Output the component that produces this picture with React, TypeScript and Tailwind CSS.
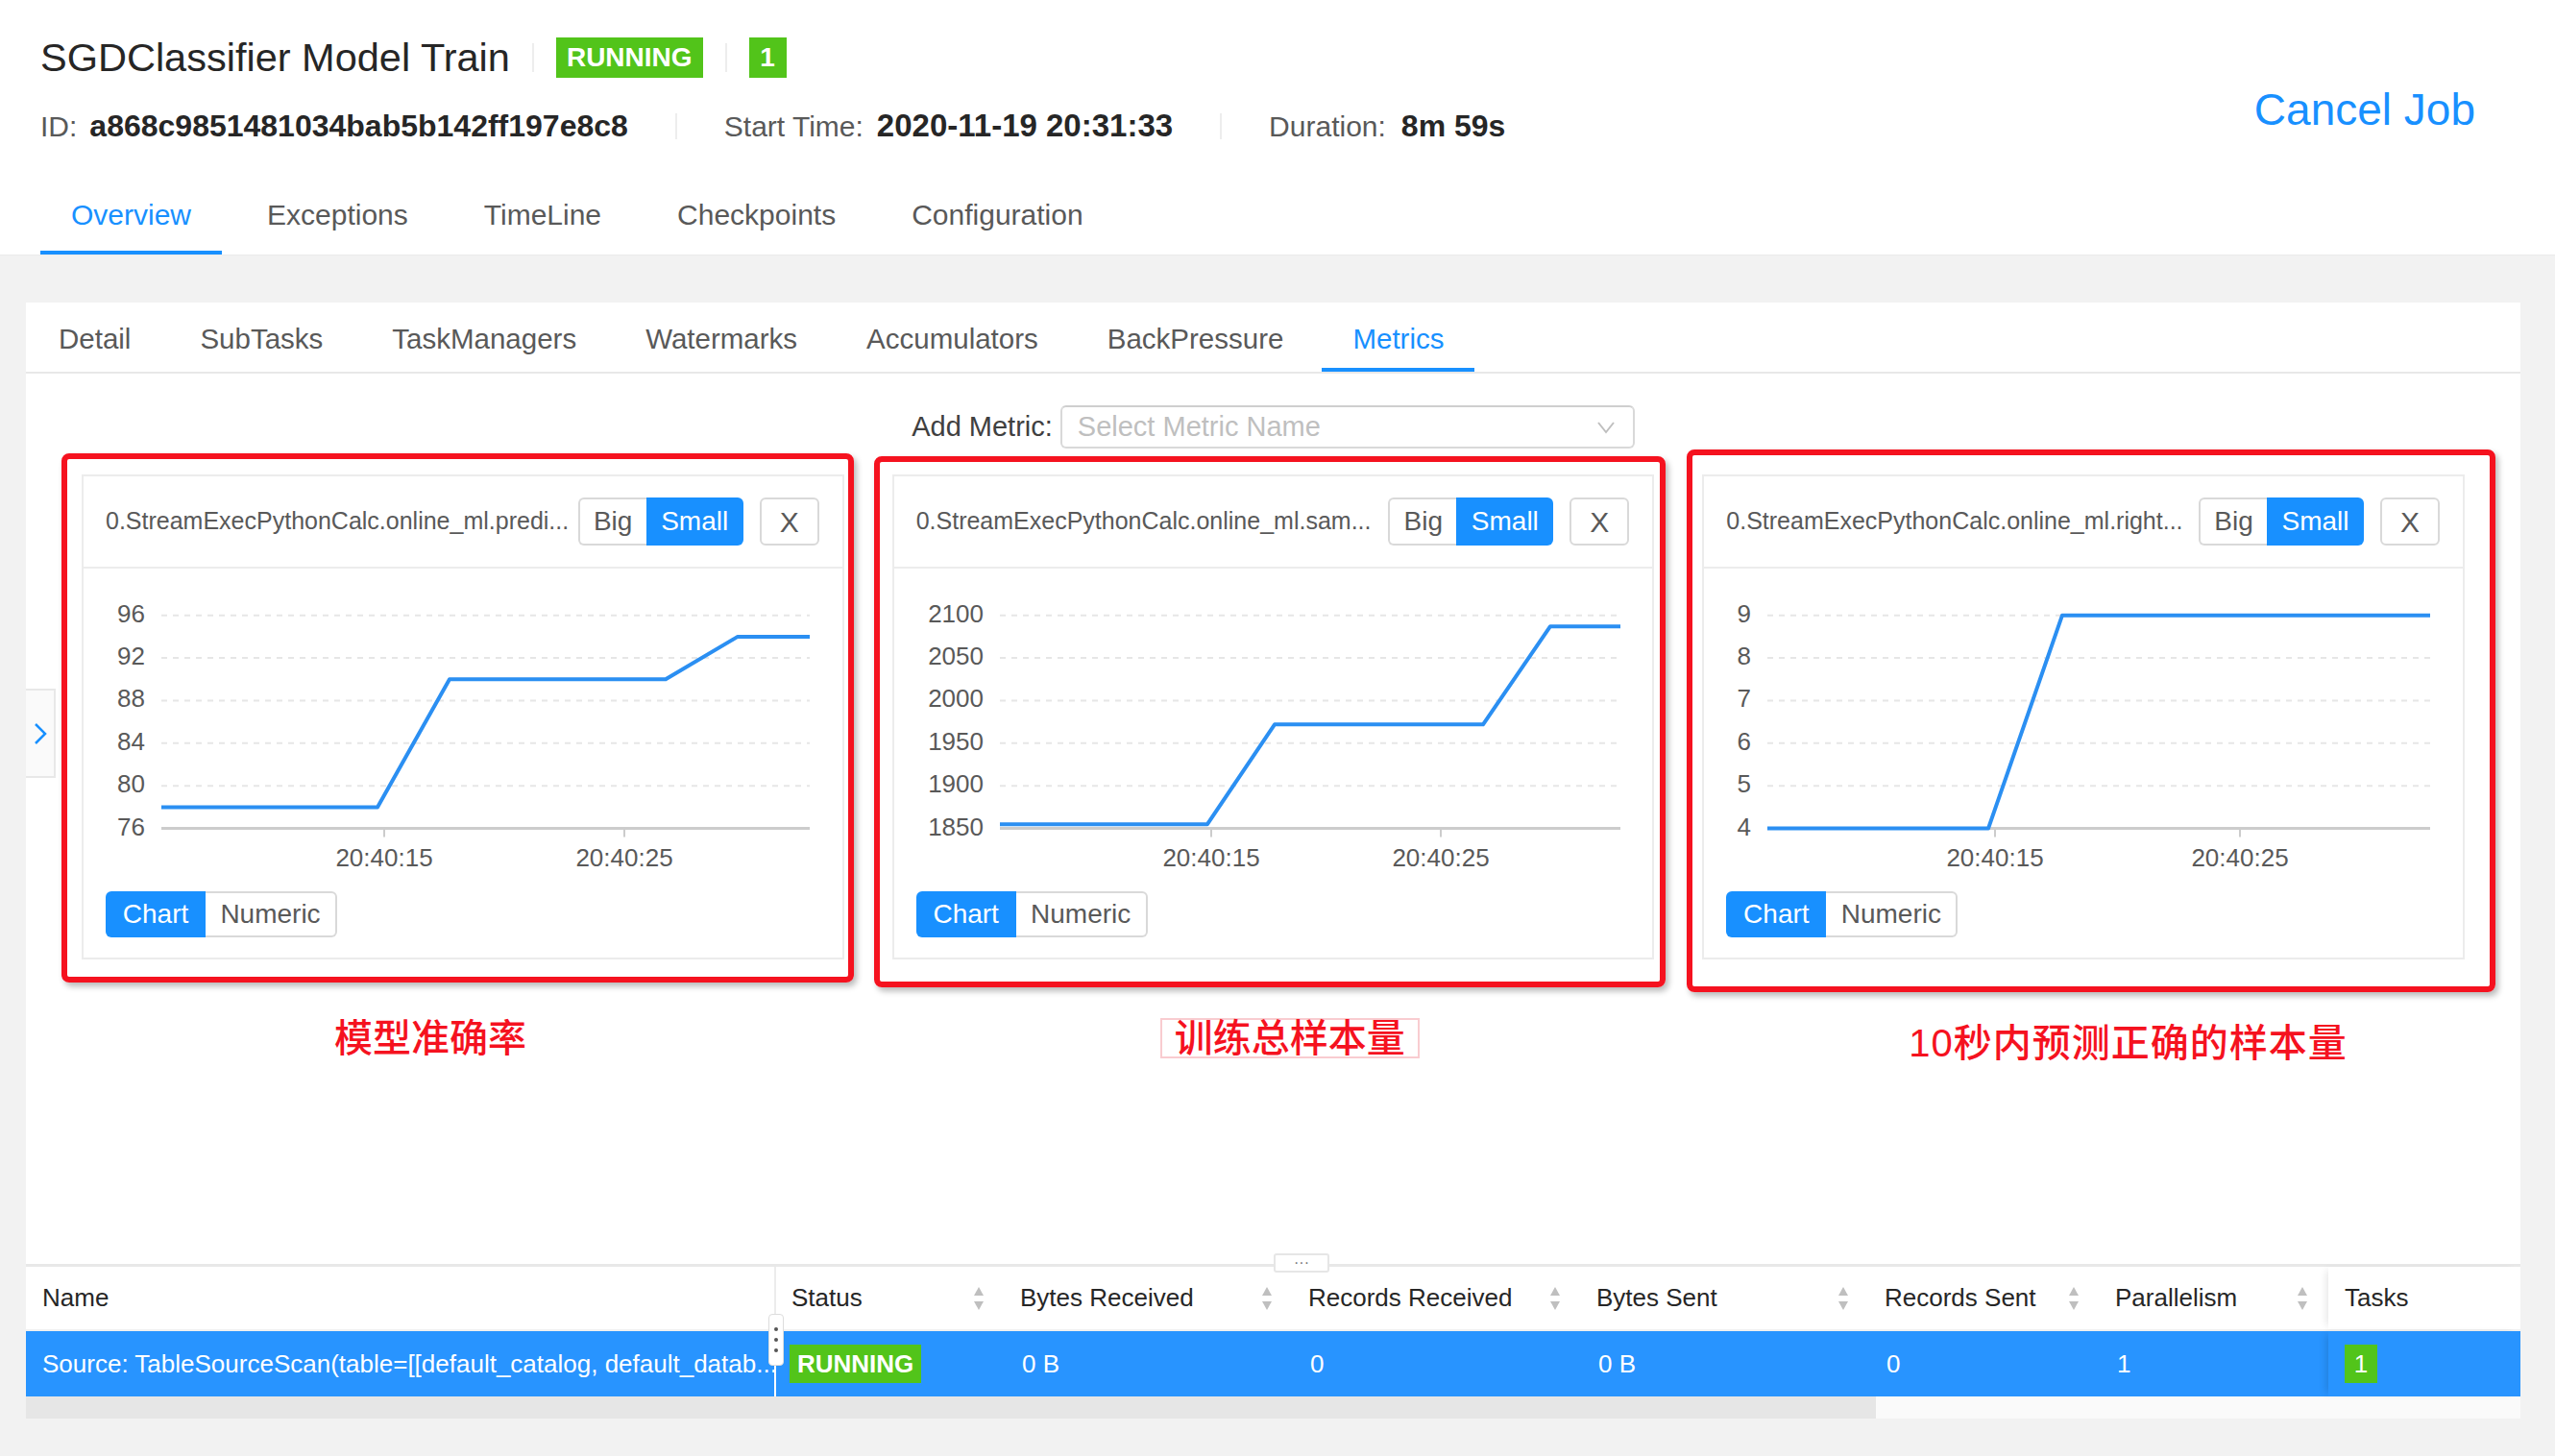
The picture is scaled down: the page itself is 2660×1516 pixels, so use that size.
import React from 'react';

type Chart = {
  title: string;
  yTicks: string[];
  min: number;
  max: number;
  labelEnd: number;
  gridStart: number;
  ticks: number[];
  points: [number, number][];
  box: string;
};

const charts: Chart[] = [
  {
    title: '0.StreamExecPythonCalc.online_ml.predi...',
    yTicks: ['96', '92', '88', '84', '80', '76'],
    min: 76,
    max: 96,
    labelEnd: 66,
    gridStart: 83,
    ticks: [315, 565],
    points: [[83, 78], [308, 78], [383, 90], [608, 90], [683, 94], [758, 94]],
    box: '-left-[21px] -top-[22px] -right-[10px] -bottom-[24px]',
  },
  {
    title: '0.StreamExecPythonCalc.online_ml.sam...',
    yTicks: ['2100', '2050', '2000', '1950', '1900', '1850'],
    min: 1850,
    max: 2100,
    labelEnd: 95,
    gridStart: 112,
    ticks: [332, 571],
    points: [[112, 1855], [328, 1855], [398, 1972], [615, 1972], [685, 2087], [758, 2087]],
    box: '-left-[19px] -top-[19px] -right-[12px] -bottom-[29px]',
  },
  {
    title: '0.StreamExecPythonCalc.online_ml.right...',
    yTicks: ['9', '8', '7', '6', '5', '4'],
    min: 4,
    max: 9,
    labelEnd: 51,
    gridStart: 68,
    ticks: [305, 560],
    points: [[68, 4], [298, 4], [375, 9], [758, 9]],
    box: '-left-[16px] -top-[26px] -right-[32px] -bottom-[34px]',
  },
];

const Sep = () => <span className="mx-[23px] w-[2px] h-[30px] bg-[#ededed]" />;

const LineChart: React.FC<{ c: Chart }> = ({ c }) => {
  const top = 38.7;
  const bottom = 260.6;
  const step = (bottom - top) / 5;
  const y = (v: number) => bottom - ((v - c.min) / (c.max - c.min)) * (bottom - top);
  const d = c.points.map(([x, v], i) => `${i === 0 ? 'M' : 'L'}${x} ${y(v).toFixed(1)}`).join(' ');
  return (
    <svg width="790" height="320" className="mt-[10px] overflow-visible">
      <g transform="translate(-2,0)">
        {c.yTicks.map((t, i) => {
          const gy = top + i * step;
          return (
            <g key={t}>
              {i < 5 && (
                <line x1={c.gridStart} x2={758} y1={gy} y2={gy} stroke="#e6e6e6" strokeWidth="2" strokeDasharray="6 6" />
              )}
              <text x={c.labelEnd} y={gy + 7} textAnchor="end" fontSize="26" fill="#595959">
                {t}
              </text>
            </g>
          );
        })}
        <line x1={c.gridStart} x2={758} y1={bottom} y2={bottom} stroke="#cccccc" strokeWidth="3" />
        {c.ticks.map((tx, i) => (
          <g key={tx}>
            <line x1={tx} x2={tx} y1={bottom} y2={bottom + 9} stroke="#cccccc" strokeWidth="2" />
            <text x={tx} y={300} textAnchor="middle" fontSize="26" fill="#595959">
              {i === 0 ? '20:40:15' : '20:40:25'}
            </text>
          </g>
        ))}
        <path d={d} fill="none" stroke="#2b8ff2" strokeWidth="4" strokeLinejoin="round" />
      </g>
    </svg>
  );
};

const MetricCard: React.FC<{ c: Chart }> = ({ c }) => (
  <div className="relative">
    <div className="h-[505px] bg-white border-2 border-[#ececec] flex flex-col">
      <div className="h-[96px] border-b-2 border-[#ececec] flex items-center pl-[23px] pr-[24px]">
        <span className="flex-1 whitespace-nowrap overflow-hidden text-[25px] text-[#595959]">{c.title}</span>
        <div className="flex h-[50px] text-[28px]">
          <span className="w-[71px] flex items-center justify-center border-2 border-r-0 border-[#d9d9d9] rounded-l-[6px] text-[#595959]">Big</span>
          <span className="w-[101px] flex items-center justify-center bg-[#1890ff] rounded-r-[6px] text-white">Small</span>
        </div>
        <span className="ml-[17px] w-[62px] h-[50px] flex items-center justify-center border-2 border-[#d9d9d9] rounded-[6px] text-[30px] text-[#595959]">X</span>
      </div>
      <LineChart c={c} />
      <div className="ml-[23px] mt-[6px] flex h-[48px] text-[28px]">
        <span className="w-[104px] flex items-center justify-center bg-[#1890ff] text-white rounded-l-[6px]">Chart</span>
        <span className="w-[137px] flex items-center justify-center border-2 border-l-0 border-[#d9d9d9] rounded-r-[6px] text-[#595959]">Numeric</span>
      </div>
    </div>
    <div className={`pointer-events-none absolute ${c.box} border-[6px] border-[#f5121f] rounded-[8px] shadow-[3px_4px_6px_rgba(0,0,0,0.28)]`} />
  </div>
);

const SortIcon = () => (
  <svg width="14" height="28" viewBox="0 0 14 28">
    <path d="M7 2 L12 11 L2 11 Z" fill="#bfbfbf" />
    <path d="M7 26 L12 17 L2 17 Z" fill="#bfbfbf" />
  </svg>
);

const columns = [
  { name: 'Name', w: 'w-[781px]', sort: false },
  { name: 'Status', w: 'w-[238px]', sort: true },
  { name: 'Bytes Received', w: 'w-[300px]', sort: true },
  { name: 'Records Received', w: 'w-[300px]', sort: true },
  { name: 'Bytes Sent', w: 'w-[300px]', sort: true },
  { name: 'Records Sent', w: 'w-[240px]', sort: true },
  { name: 'Parallelism', w: 'w-[238px]', sort: true },
];

const mainTabs = ['Overview', 'Exceptions', 'TimeLine', 'Checkpoints', 'Configuration'];
const subTabs = ['Detail', 'SubTasks', 'TaskManagers', 'Watermarks', 'Accumulators', 'BackPressure', 'Metrics'];

export default function App() {
  return (
    <div className="w-[2660px] h-[1516px] overflow-hidden bg-[#f2f2f2] flex flex-col font-['Liberation_Sans','Noto_Sans_CJK_SC',sans-serif]">
      <header className="bg-white h-[266px] shrink-0 flex flex-col pl-[42px] pr-[83px] border-b border-[#ebebeb]">
        <div className="flex justify-between">
          <div className="flex flex-col pt-[39px]">
            <div className="flex items-center h-[42px]">
              <h1 className="text-[41.5px] leading-none text-[#262626]">SGDClassifier Model Train</h1>
              <Sep />
              <span className="h-[42px] px-[11px] bg-[#52c41a] text-white font-bold text-[28px] flex items-center">RUNNING</span>
              <Sep />
              <span className="h-[42px] w-[39px] bg-[#52c41a] text-white font-bold text-[28px] flex items-center justify-center">1</span>
            </div>
            <div className="flex items-center h-[40px] mt-[30px] text-[30px] text-[#595959]">
              <span>ID:</span>
              <span className="ml-[13px] font-bold text-[32px] text-[#262626]">a868c9851481034bab5b142ff197e8c8</span>
              <span className="mx-[49px] w-[2px] h-[27px] bg-[#ededed]" />
              <span>Start Time:</span>
              <span className="ml-[14px] font-bold text-[33px] text-[#262626]">2020-11-19 20:31:33</span>
              <span className="mx-[49px] w-[2px] h-[27px] bg-[#ededed]" />
              <span>Duration:</span>
              <span className="ml-[16px] font-bold text-[32px] text-[#262626]">8m 59s</span>
            </div>
          </div>
          <button className="mt-[77px] text-[46px] leading-none text-[#1890ff]">Cancel Job</button>
        </div>
        <nav className="mt-[32px] h-[83px] flex gap-[15px]">
          {mainTabs.map((t, i) => (
            <span
              key={t}
              className={
                i === 0
                  ? 'px-[32px] pt-[2px] flex items-center text-[30px] border-b-[4px] border-[#1890ff] text-[#1890ff]'
                  : 'px-[32px] pt-[2px] flex items-center text-[30px] border-b-[4px] border-transparent text-[#595959]'
              }
            >
              {t}
            </span>
          ))}
        </nav>
      </header>

      <main className="flex-1 pl-[27px] pt-[49px]">
        <section className="relative bg-white w-[2597px] h-[1162px] flex flex-col">
          <div className="h-[74px] flex gap-[8px] pl-[2px] border-b-2 border-[#e8e8e8]">
            {subTabs.map((t) => (
              <span
                key={t}
                className={
                  t === 'Metrics'
                    ? 'px-[32px] pt-[9px] flex items-center text-[29.5px] border-b-[4px] border-[#1890ff] text-[#1890ff]'
                    : 'px-[32px] pt-[9px] flex items-center text-[29.5px] border-b-[4px] border-transparent text-[#595959]'
                }
              >
                {t}
              </span>
            ))}
          </div>

          <div className="mt-[33px] h-[45px] flex items-center justify-center gap-[8px]">
            <span className="text-[29px] text-[#404040]">Add Metric:</span>
            <div className="w-[598px] h-[45px] border-2 border-[#d9d9d9] border-t-[#cfcfcf] rounded-[6px] pl-[16px] pr-[18px] flex items-center justify-between">
              <span className="text-[29px] text-[#bfbfbf]">Select Metric Name</span>
              <svg width="20" height="14" viewBox="0 0 20 14">
                <path d="M2 2 L10 12 L18 2" fill="none" stroke="#bfbfbf" strokeWidth="2" />
              </svg>
            </div>
          </div>

          <div className="mt-[27px] grid grid-cols-3 gap-[50px] px-[58px]">
            {charts.map((c) => (
              <MetricCard key={c.title} c={c} />
            ))}
          </div>

          <div className="grid grid-cols-3 gap-[50px] px-[58px] text-[#f5121f] font-medium">
            <div className="ml-[263px] mt-[62px] text-[40px] leading-none">模型准确率</div>
            <div className="mt-[61px]">
              <span className="ml-[279px] inline-flex items-center h-[42px] px-[13px] border-2 border-[#f9ccd0] text-[40px] leading-none">训练总样本量</span>
            </div>
            <div className="ml-[215px] mt-[67px] text-[40px] leading-none tracking-[1px]">10秒内预测正确的样本量</div>
          </div>

          <div className="relative mt-auto">
            <div className="absolute left-[1299px] -top-[11px] w-[58px] h-[20px] bg-white border-2 border-[#e6e6e6] rounded-[3px] flex items-center justify-center text-[16px] leading-none text-[#777] z-10">···</div>
            <div className="flex h-[70px] border-t-[3px] border-[#e8e8e8] border-b-2 border-b-[#f0f0f0] text-[26px] text-[#262626]">
              {columns.map((col, i) => (
                <div
                  key={col.name}
                  className={
                    i === 0
                      ? `${col.w} pl-[17px] flex items-center border-r-2 border-[#ececec]`
                      : `${col.w} pl-[16px] pr-[20px] flex items-center justify-between`
                  }
                >
                  <span>{col.name}</span>
                  {col.sort && <SortIcon />}
                </div>
              ))}
              <div className="w-[200px] pl-[17px] flex items-center shadow-[-6px_0_8px_-4px_rgba(0,0,0,0.1)]">Tasks</div>
            </div>
            <div className="flex h-[68px] bg-[#2894ff] text-[26px] text-white">
              <div className="w-[781px] pl-[17px] pr-[8px] flex items-center border-r-2 border-white whitespace-nowrap overflow-hidden">
                Source: TableSourceScan(table=[[default_catalog, default_datab...
              </div>
              <div className="w-[238px] pl-[14px] flex items-center">
                <span className="h-[40px] px-[8px] bg-[#52c41a] font-bold flex items-center">RUNNING</span>
              </div>
              <div className="w-[300px] pl-[18px] flex items-center">0 B</div>
              <div className="w-[300px] pl-[18px] flex items-center">0</div>
              <div className="w-[300px] pl-[18px] flex items-center">0 B</div>
              <div className="w-[240px] pl-[18px] flex items-center">0</div>
              <div className="w-[238px] pl-[18px] flex items-center">1</div>
              <div className="w-[200px] pl-[17px] flex items-center shadow-[-6px_0_8px_-4px_rgba(0,0,0,0.15)]">
                <span className="w-[34px] h-[40px] bg-[#52c41a] flex items-center justify-center">1</span>
              </div>
            </div>
            <div className="h-[23px] bg-[#fafafa] flex">
              <div className="w-[1926px] h-full bg-[#e6e6e6]" />
            </div>
            <div className="absolute left-[773px] top-[52px] w-[16px] h-[54px] bg-white border border-[#dddddd] rounded-[4px] flex flex-col items-center justify-center gap-[7px]">
              <span className="w-[4px] h-[4px] rounded-full bg-[#555]" />
              <span className="w-[4px] h-[4px] rounded-full bg-[#555]" />
              <span className="w-[4px] h-[4px] rounded-full bg-[#555]" />
            </div>
          </div>

          <div className="absolute left-0 top-[402px] w-[31px] h-[93px] bg-[#fafafa] border-2 border-l-0 border-[#e8e8e8] flex items-center justify-center">
            <svg width="16" height="24" viewBox="0 0 16 24">
              <path d="M3 2 L13 12 L3 22" fill="none" stroke="#1890ff" strokeWidth="2.5" />
            </svg>
          </div>
        </section>
      </main>
    </div>
  );
}
